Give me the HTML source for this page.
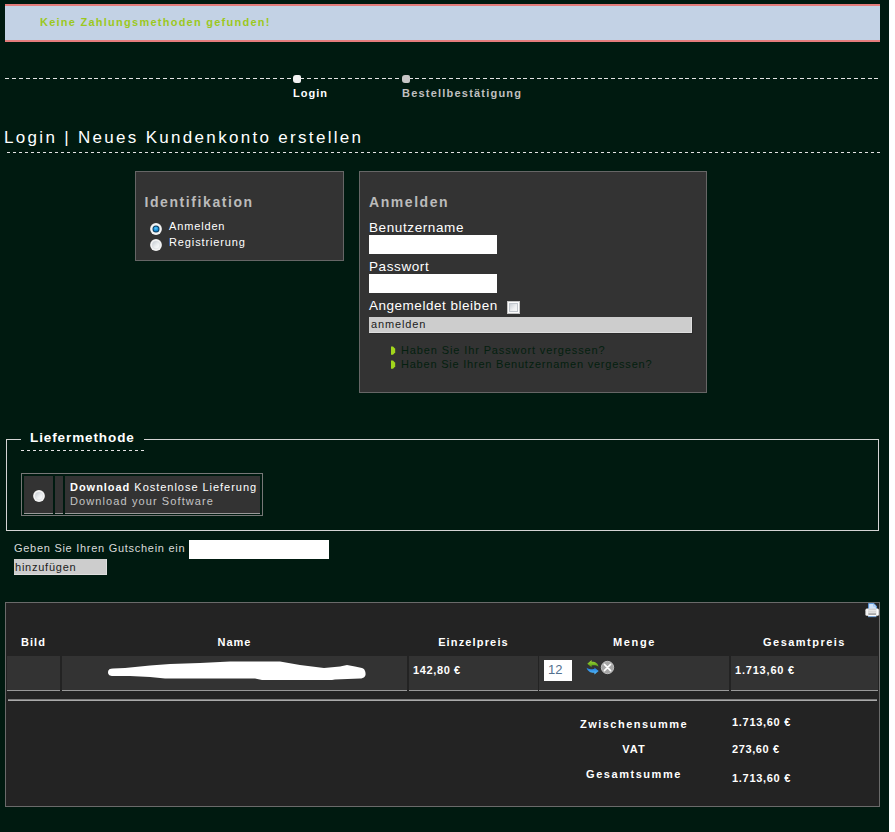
<!DOCTYPE html>
<html lang="de">
<head>
<meta charset="utf-8">
<title>Bestellung</title>
<style>
html,body{margin:0;padding:0;}
body{width:895px;height:832px;overflow:hidden;background:#fff;position:relative;
  font-family:"Liberation Sans",Arial,sans-serif;font-size:11px;color:#fff;letter-spacing:1px;}
#page{position:absolute;left:0;top:0;width:889px;height:832px;background:#001a10;overflow:hidden;}
.abs{position:absolute;}
.t{position:absolute;white-space:nowrap;line-height:14px;}
/* banner */
#msg{left:5px;top:4px;width:875px;height:34px;background:#c3d2e5;border-top:2px solid #e47c7c;border-bottom:2px solid #e47c7c;}
/* dashed lines */
.dash7{height:1px;background:repeating-linear-gradient(to right,#e4e4e4 0,#e4e4e4 4px,transparent 4px,transparent 7px);}
.dash6{height:1px;background:repeating-linear-gradient(to right,#e4e4e4 0,#e4e4e4 3px,transparent 3px,transparent 6px);}
.dot{width:8px;height:8px;border-radius:3px 2px 2px 3px;background:#f2f2f2;}
.b{font-weight:bold;}
h1{margin:0;font-weight:normal;font-size:17px;letter-spacing:2.31px;white-space:nowrap;line-height:20px;}
.panel{background:#333;border:1px solid #666;box-sizing:border-box;}
.ph{font-weight:bold;font-size:14px;letter-spacing:1.64px;color:#bbb;line-height:16px;}
.lbl{font-size:13.5px;letter-spacing:0.6px;line-height:16px;}
.inp{background:#fff;box-sizing:border-box;}
.btn{background:#cdcdcd;box-sizing:border-box;border-right:1px solid #dedede;border-bottom:1px solid #dedede;box-shadow:1px 1px 0 #2b2b2b;}
.btn .t{color:#1c1c1c;}
.cell{background:#333;border-bottom:1px solid #999;box-sizing:border-box;}
.lnk{color:#04200f;}
</style>
</head>
<body>
<div id="page">

<div id="msg" class="abs"></div>
<div class="t b" style="left:40px;top:15px;color:#9bc81e;letter-spacing:1.25px">Keine Zahlungsmethoden gefunden!</div>

<div class="abs" style="left:5px;top:78px;width:288px;height:1px;background:repeating-linear-gradient(to right,#e4e4e4 0,#e4e4e4 4px,transparent 4px,transparent 6.88px)"></div>
<div class="abs" style="left:300px;top:78px;width:578px;height:1px;background:repeating-linear-gradient(to right,transparent 0,transparent 0.5px,#e4e4e4 0.5px,#e4e4e4 4.5px,transparent 4.5px,transparent 6.75px)"></div>
<div class="abs dot" style="left:293px;top:75px"></div>
<div class="abs dot" style="left:402px;top:75px;background:#c6c6c6"></div>
<div class="t b" style="left:293px;top:86px">Login</div>
<div class="t b" style="left:402px;top:86px;color:#c0c0c0;letter-spacing:1.21px">Bestellbestätigung</div>

<h1 class="abs" style="left:4px;top:128px">Login | Neues Kundenkonto erstellen</h1>
<div class="abs dash6" style="left:7px;top:152px;width:873px"></div>

<!-- Identifikation -->
<div class="abs panel" style="left:135px;top:171px;width:209px;height:90px"></div>
<div class="t ph" style="left:144.5px;top:194px;letter-spacing:1.58px">Identifikation</div>
<svg class="abs" style="left:150px;top:223px" width="12" height="12" viewBox="0 0 12 12"><defs><linearGradient id="rg" x1="0" y1="0" x2="1" y2="1"><stop offset="0" stop-color="#c3c9d0"/><stop offset="0.55" stop-color="#eceef0"/><stop offset="1" stop-color="#ffffff"/></linearGradient><radialGradient id="rb" cx="0.45" cy="0.35" r="0.7"><stop offset="0" stop-color="#5ccaff"/><stop offset="0.6" stop-color="#1c90d6"/><stop offset="1" stop-color="#0f6aa8"/></radialGradient></defs><circle cx="6" cy="6" r="5.9" fill="#f3f3f3"/><circle cx="6" cy="6" r="3.5" fill="#0b3a5a"/><circle cx="6" cy="6" r="2.55" fill="url(#rb)"/></svg>
<div class="t" style="left:169px;top:219px;letter-spacing:0.85px">Anmelden</div>
<svg class="abs" style="left:150px;top:239px" width="12" height="12" viewBox="0 0 12 12"><circle cx="6" cy="6" r="5.9" fill="#f3f3f3"/><circle cx="6" cy="6" r="3.9" fill="url(#rg)" stroke="#d9dcdf" stroke-width="0.6"/></svg>
<div class="t" style="left:169px;top:235px;letter-spacing:0.88px">Registrierung</div>

<!-- Anmelden -->
<div class="abs panel" style="left:359px;top:171px;width:348px;height:222px"></div>
<div class="t ph" style="left:369px;top:194px;letter-spacing:1.56px">Anmelden</div>
<div class="t lbl" style="left:369px;top:219.6px">Benutzername</div>
<div class="abs inp" style="left:369px;top:235px;width:128px;height:19px"></div>
<div class="t lbl" style="left:369px;top:258.6px">Passwort</div>
<div class="abs inp" style="left:369px;top:274px;width:128px;height:19px"></div>
<div class="t lbl" style="left:369px;top:297.6px;letter-spacing:0.52px">Angemeldet bleiben</div>
<div class="abs" style="left:507px;top:301px;width:13px;height:13px;box-sizing:border-box;border:1px solid #c4c4c4;background:#fdfdfd;padding:1px"><div style="width:9px;height:9px;box-sizing:border-box;border:1px solid #c2c7cd;background:linear-gradient(135deg,#ccd1d7,#f0f1f2 60%,#f8f8f8)"></div></div>
<div class="abs btn" style="left:369px;top:317px;width:323px;height:16px"></div>
<div class="t" style="left:371px;top:317px;color:#1c1c1c;letter-spacing:0.85px">anmelden</div>

<svg class="abs" style="left:391px;top:346px" width="5" height="9" viewBox="0 0 5 9"><path d="M0,0.5H2L4.2,2.8V6.4L2,8.8H0Z" fill="#a2d61c"/></svg>
<div class="t lnk" style="left:401px;top:343px;letter-spacing:0.88px">Haben Sie Ihr Passwort vergessen?</div>
<svg class="abs" style="left:391px;top:360px" width="5" height="9" viewBox="0 0 5 9"><path d="M0,0.5H2L4.2,2.8V6.4L2,8.8H0Z" fill="#a2d61c"/></svg>
<div class="t lnk" style="left:401px;top:357px;letter-spacing:0.78px">Haben Sie Ihren Benutzernamen vergessen?</div>

<!-- Liefermethode -->
<div class="abs" style="left:6px;top:439px;width:873px;height:92px;border:1px solid #d4d4d4;box-sizing:border-box"></div>
<div class="abs" style="left:21px;top:436px;width:123px;height:8px;background:#001a10"></div>
<div class="t b" style="left:30px;top:430px;font-size:13.5px;letter-spacing:0.9px;line-height:16px">Liefermethode</div>
<div class="abs dash6" style="left:21px;top:450px;width:123px"></div>

<div class="abs" style="left:21px;top:473px;width:242px;height:43px;border:1px solid #777;box-sizing:border-box"></div>
<div class="abs cell" style="left:24px;top:476px;width:29px;height:38px"></div>
<div class="abs cell" style="left:55px;top:476px;width:8px;height:38px"></div>
<div class="abs cell" style="left:65px;top:476px;width:195px;height:38px"></div>
<svg class="abs" style="left:33px;top:490px" width="12" height="12" viewBox="0 0 12 12"><circle cx="6" cy="6" r="5.9" fill="#f3f3f3"/><circle cx="6" cy="6" r="3.9" fill="url(#rg)" stroke="#d9dcdf" stroke-width="0.6"/></svg>
<div class="t" style="left:70px;top:480px;letter-spacing:0.97px"><b>Download</b> Kostenlose Lieferung</div>
<div class="t" style="left:70px;top:494px;color:#c4c4c4;letter-spacing:1.1px">Download your Software</div>

<div class="t" style="left:14px;top:541px;color:#dadada;letter-spacing:0.72px">Geben Sie Ihren Gutschein ein</div>
<div class="abs inp" style="left:189px;top:540px;width:140px;height:19px"></div>
<div class="abs btn" style="left:14px;top:559px;width:93px;height:16px;box-shadow:none"></div>
<div class="t" style="left:15px;top:560px;color:#1c1c1c;letter-spacing:0.76px">hinzufügen</div>

<!-- cart -->
<div class="abs" style="left:5px;top:602px;width:875px;height:205px;background:#232323;border:1px solid #6a6a6a;box-sizing:border-box"></div>

<div class="t b" style="left:7px;width:53px;text-align:center;top:635px">Bild</div>
<div class="t b" style="left:62px;width:345px;text-align:center;top:635px">Name</div>
<div class="t b" style="left:409px;width:129px;text-align:center;top:635px;letter-spacing:1.15px">Einzelpreis</div>
<div class="t b" style="left:539px;width:191px;text-align:center;top:635px;letter-spacing:1.6px">Menge</div>
<div class="t b" style="left:731px;width:147px;text-align:center;top:635px;letter-spacing:1.48px">Gesamtpreis</div>

<div class="abs cell" style="left:7px;top:656px;width:53px;height:35px"></div>
<div class="abs cell" style="left:62px;top:656px;width:345px;height:35px"></div>
<div class="abs cell" style="left:409px;top:656px;width:129px;height:35px"></div>
<div class="abs cell" style="left:539px;top:656px;width:190px;height:35px"></div>
<div class="abs cell" style="left:731px;top:656px;width:147px;height:35px"></div>

<svg class="abs" style="left:100px;top:656px" width="280" height="34" viewBox="100 656 280 34"><path d="M108,672C108,669.5 110,668.6 113,668.5L125,668L150,665.5L170,664L200,663L230,661.5L280,661.5L300,665L324,668L340,666.5L347,665L355,666.5L362,668C365,669 365.6,672 365.6,674C365.6,677 363,678.5 360,678.5L335,679.6L332,680L262,680L255,678.6L165,678.6L150,677L130,676L113,676C110,676 108,675 108,672Z" fill="#fff"/></svg>

<div class="t b" style="left:413px;top:663px;letter-spacing:0.63px">142,80 €</div>
<div class="abs inp" style="left:544px;top:660px;width:28px;height:21px"></div>
<div class="t" style="left:548px;top:662px;font-size:13px;letter-spacing:0;line-height:16px;color:#53708e">12</div>
<div class="t b" style="left:735px;top:663px;letter-spacing:0.8px">1.713,60 €</div>

<div class="abs" style="left:8px;top:699px;width:869px;height:1px;background:#7a7a7a"></div>
<div class="abs" style="left:8px;top:700px;width:869px;height:1px;background:#ababab"></div>

<div class="t b" style="left:534px;width:200px;text-align:center;top:717px;letter-spacing:1.5px">Zwischensumme</div>
<div class="t b" style="left:732px;top:715px;letter-spacing:0.7px">1.713,60 €</div>
<div class="t b" style="left:534px;width:200px;text-align:center;top:742px">VAT</div>
<div class="t b" style="left:732px;top:742px;letter-spacing:0.6px">273,60 €</div>
<div class="t b" style="left:534px;width:200px;text-align:center;top:767px;letter-spacing:1.55px">Gesamtsumme</div>
<div class="t b" style="left:732px;top:771px;letter-spacing:0.7px">1.713,60 €</div>

<!-- icons -->
<svg class="abs" style="left:585px;top:659px" width="16" height="16" viewBox="0 0 16 16">
<defs>
<linearGradient id="gg" x1="0" y1="0" x2="0" y2="1"><stop offset="0" stop-color="#a8dc3a"/><stop offset="1" stop-color="#4f9a12"/></linearGradient>
<linearGradient id="gb" x1="0" y1="0" x2="0" y2="1"><stop offset="0" stop-color="#1c74d8"/><stop offset="1" stop-color="#5cc6ff"/></linearGradient>
</defs>
<path d="M2.3,4.7L6.6,0.9V2.7C10.4,2.5 13.2,4.5 13.5,7.8C11.6,6.2 9.4,6.2 6.6,6.4V8.3Z" fill="url(#gg)"/>
<path d="M13.7,11.9L9.4,15.5V13.8C5.8,14 2.5,12.3 1.6,8.7C3.8,10.2 6.8,10.3 9.4,10.1V8.4Z" fill="url(#gb)"/>
</svg>
<svg class="abs" style="left:600px;top:660px" width="15" height="15" viewBox="0 0 15 15">
<circle cx="7.5" cy="7.5" r="6.2" fill="#a6a6a6" stroke="#c4c4c4" stroke-width="0.9"/>
<path d="M4.4,4.4L10.6,10.6M10.6,4.4L4.4,10.6" stroke="#fff" stroke-width="1.6" stroke-linecap="round"/>
</svg>
<svg class="abs" style="left:865px;top:603px" width="15" height="15" viewBox="0 0 15 15">
<defs>
<linearGradient id="pb" x1="0" y1="0" x2="1" y2="0"><stop offset="0" stop-color="#c9c9c9"/><stop offset="0.12" stop-color="#ffffff"/><stop offset="0.3" stop-color="#d6d6d6"/><stop offset="0.7" stop-color="#d2d2d2"/><stop offset="0.88" stop-color="#ffffff"/><stop offset="1" stop-color="#bdbdbd"/></linearGradient>
</defs>
<path d="M3.6,0.5H8.8L11.4,3V6.5H3.6Z" fill="#d2e3f8" stroke="#5a9ce6" stroke-width="0.9"/>
<path d="M8.6,0.7V3.2H11.2" fill="none" stroke="#8fbdf0" stroke-width="0.7"/>
<rect x="0.3" y="5.6" width="13.8" height="7.2" rx="1.6" fill="url(#pb)"/>
<rect x="3.4" y="6.4" width="7.6" height="4.8" fill="#cfcfcf"/>
<path d="M3.4,7.6H11M3.4,9.2H11" stroke="#f4f4f4" stroke-width="0.7"/>
<rect x="3.2" y="11.2" width="8" height="2.4" fill="#ffffff"/>
<path d="M3,13.7H11.4" stroke="#6aa8ea" stroke-width="0.8"/>
<path d="M3.4,11.2H11" stroke="#555" stroke-width="0.7"/>
</svg>

</div>
</body>
</html>
